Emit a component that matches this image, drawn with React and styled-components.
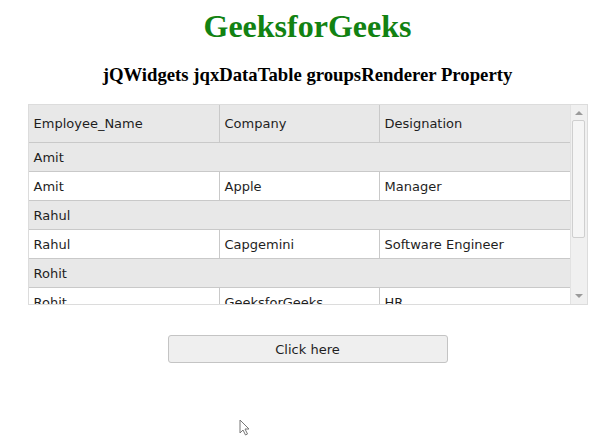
import React from "react";
import styled, { createGlobalStyle } from "styled-components";

const GlobalStyle = createGlobalStyle`
  body {
    margin: 8px;
    background: #fff;
    font-family: "Liberation Serif", "Times New Roman", serif;
  }
`;

const Page = styled.div`
  width: 599px;
  min-height: 431px;
  display: flex;
  flex-direction: column;
  align-items: center;
  position: relative;
`;

const Title = styled.h1`
  margin: 0;
  font-size: 32px;
  font-weight: 700;
  color: #128212;
  line-height: 37px;
`;

const Subtitle = styled.h3`
  margin: 18.7px 0;
  font-size: 18.72px;
  font-weight: 700;
  color: #000;
  line-height: 22px;
`;

const Frame = styled.div`
  width: 560px;
  height: 201px;
  box-sizing: border-box;
  border: 1px solid #dcdcdc;
  display: flex;
  font-family: "DejaVu Sans", Verdana, sans-serif;
  font-size: 13px;
  color: #1e1e1e;
  background: #fff;
`;

const Content = styled.div`
  flex: 1;
  display: flex;
  flex-direction: column;
  min-width: 0;
`;

const Row = styled.div`
  display: grid;
  grid-template-columns: ${(p) => (p.$group ? "1fr" : "190px 160px 1fr")};
  height: ${(p) => (p.$head ? 38 : 29)}px;
  box-sizing: border-box;
  border-bottom: 1px solid #c9c9c9;
  background: ${(p) => (p.$head || p.$group ? "#e8e8e8" : "#fff")};
  flex-shrink: 0;
`;

const Cell = styled.div`
  display: flex;
  align-items: center;
  padding: 0 5px;
  white-space: nowrap;
  overflow: hidden;
  & + & {
    border-left: 1px solid #c9c9c9;
  }
`;

const Body = styled.div`
  flex: 1;
  overflow: hidden;
`;

const Scrollbar = styled.div`
  width: 17px;
  flex-shrink: 0;
  background: #f0f0f0;
  border-left: 1px solid #e2e2e2;
  display: flex;
  flex-direction: column;
  align-items: center;
  padding: 4px 0;
  box-sizing: border-box;
`;

const Arrow = styled.div`
  width: 0;
  height: 0;
  border-left: 4px solid transparent;
  border-right: 4px solid transparent;
  ${(p) =>
    p.$down
      ? "border-top: 4px solid #9a9a9a; margin-top: auto; margin-bottom: 2px;"
      : "border-bottom: 4px solid #9a9a9a; margin-top: 2px;"}
`;

const Thumb = styled.div`
  width: 13px;
  height: 118px;
  margin-top: 5px;
  box-sizing: border-box;
  background: #f5f5f5;
  border: 1px solid #cfcfcf;
  border-radius: 2px;
`;

const Button = styled.button`
  margin-top: 30px;
  width: 280px;
  height: 28px;
  background: #efefef;
  border: 1px solid #c4c4c4;
  border-radius: 3px;
  font-family: "DejaVu Sans", Verdana, sans-serif;
  font-size: 13px;
  color: #1e1e1e;
  cursor: pointer;
`;

const Cursor = styled.svg`
  position: absolute;
  left: 231px;
  top: 411px;
  display: block;
`;

const groups = [
  { name: "Amit", company: "Apple", role: "Manager" },
  { name: "Rahul", company: "Capgemini", role: "Software Engineer" },
  { name: "Rohit", company: "GeeksforGeeks", role: "HR" },
];

export default function App() {
  return (
    <>
      <GlobalStyle />
      <Page>
        <Title>GeeksforGeeks</Title>
        <Subtitle>jQWidgets jqxDataTable groupsRenderer Property</Subtitle>
        <Frame>
          <Content>
            <Row $head>
              <Cell>Employee_Name</Cell>
              <Cell>Company</Cell>
              <Cell>Designation</Cell>
            </Row>
            <Body>
              {groups.map((g) => (
                <React.Fragment key={g.name}>
                  <Row $group>
                    <Cell>{g.name}</Cell>
                  </Row>
                  <Row>
                    <Cell>{g.name}</Cell>
                    <Cell>{g.company}</Cell>
                    <Cell>{g.role}</Cell>
                  </Row>
                </React.Fragment>
              ))}
            </Body>
          </Content>
          <Scrollbar>
            <Arrow />
            <Thumb />
            <Arrow $down />
          </Scrollbar>
        </Frame>
        <Button>Click here</Button>
        <Cursor width="12" height="18" viewBox="0 0 12 18">
          <path d="M1 1 L1 14 L4 11 L6.5 16 L8.5 15 L6 10 L10 10 Z" fill="#fff" stroke="#777" strokeWidth="1" />
        </Cursor>
      </Page>
    </>
  );
}
